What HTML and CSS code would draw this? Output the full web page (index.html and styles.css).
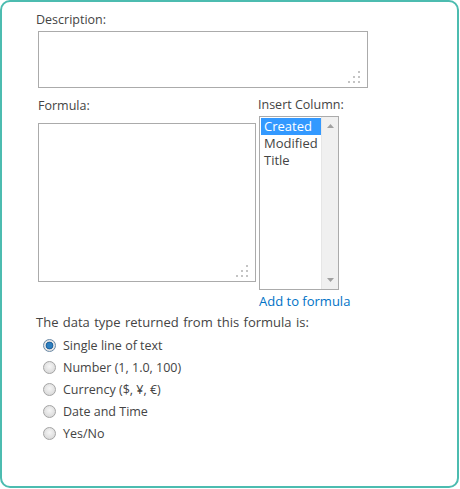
FILE: index.html
```html
<!DOCTYPE html>
<html>
<head>
<meta charset="utf-8">
<link rel="stylesheet" href="styles.css">
</head>
<body>
<div class="card">
  <div class="label">Description:</div>
  <div class="box desc">
    <svg class="grip" width="13" height="13" viewBox="0 0 13 13"><g fill="#c4c4c4"><rect x="10" y="0" width="2" height="2"/><rect x="5" y="5" width="2" height="2"/><rect x="10" y="5" width="2" height="2"/><rect x="0" y="10" width="2" height="2"/><rect x="5" y="10" width="2" height="2"/><rect x="10" y="10" width="2" height="2"/></g></svg>
  </div>
  <div class="row">
    <div class="col-formula">
      <div class="label">Formula:</div>
      <div class="box formula">
        <svg class="grip" width="13" height="13" viewBox="0 0 13 13"><g fill="#c4c4c4"><rect x="10" y="0" width="2" height="2"/><rect x="5" y="5" width="2" height="2"/><rect x="10" y="5" width="2" height="2"/><rect x="0" y="10" width="2" height="2"/><rect x="5" y="10" width="2" height="2"/><rect x="10" y="10" width="2" height="2"/></g></svg>
      </div>
    </div>
    <div class="col-insert">
      <div class="label">Insert Column:</div>
      <div class="listbox">
        <div class="items">
          <div class="item selected">Created</div>
          <div class="item">Modified</div>
          <div class="item">Title</div>
        </div>
        <div class="scrollbar">
          <svg width="7" height="4" viewBox="0 0 7 4"><path d="M0 4 L3.5 0 L7 4 Z" fill="#a0a0a0"/></svg>
          <svg width="7" height="4" viewBox="0 0 7 4"><path d="M0 0 L3.5 4 L7 0 Z" fill="#a0a0a0"/></svg>
        </div>
      </div>
      <a class="link" href="#">Add to formula</a>
    </div>
  </div>
  <div class="label type-label">The data type returned from this formula is:</div>
  <div class="radios">
    <div class="radio-row"><span class="radio checked"></span><span>Single line of text</span></div>
    <div class="radio-row"><span class="radio"></span><span>Number (1, 1.0, 100)</span></div>
    <div class="radio-row"><span class="radio"></span><span>Currency ($, ¥, €)</span></div>
    <div class="radio-row"><span class="radio"></span><span>Date and Time</span></div>
    <div class="radio-row"><span class="radio"></span><span>Yes/No</span></div>
  </div>
</div>
</body>
</html>
```
FILE: styles.css
```css
html, body {
  margin: 0;
  padding: 0;
  background: #fff;
}
body {
  font-family: "Open Sans", "Noto Sans", sans-serif;
  font-size: 12.5px;
  color: #444;
}
.card {
  box-sizing: border-box;
  width: 459px;
  height: 488px;
  border: 2px solid #4cbcb0;
  border-radius: 10px;
  padding: 9px 0 0 34px;
}
.label {
  line-height: 17px;
  height: 17px;
  white-space: nowrap;
}
.box {
  position: relative;
  box-sizing: border-box;
  border: 1px solid #ababab;
  background: #fff;
}
.desc {
  margin: 3px 0 0 2px;
  width: 330px;
  height: 57px;
}
.grip {
  position: absolute;
  right: 6px;
  bottom: 3px;
}
.row {
  display: flex;
  margin-top: 8px;
}
.col-formula {
  margin-left: 2px;
  width: 220px;
}
.col-formula .label {
  margin-top: 1px;
}
.formula {
  margin-top: 9px;
  width: 218px;
  height: 159px;
}
.col-insert {
  display: flex;
  flex-direction: column;
  align-items: flex-start;
}
.listbox {
  margin: 3px 0 0 1px;
  box-sizing: border-box;
  width: 80px;
  height: 174px;
  border: 1px solid #ababab;
  display: flex;
}
.items {
  flex: 1;
  padding: 1px 0 0 1px;
}
.item {
  height: 17px;
  line-height: 17px;
  padding-left: 3px;
  font-size: 13px;
}
.item.selected {
  background: #3399ff;
  color: #fff;
}
.scrollbar {
  width: 16px;
  background: #f0f0f0;
  border-left: 1px solid #e6e6e6;
  display: flex;
  flex-direction: column;
  justify-content: space-between;
  align-items: center;
  padding: 7px 0 7px;
}
.link {
  margin: 3px 0 0 1px;
  color: #0072c6;
  text-decoration: none;
  line-height: 17px;
  font-size: 13px;
}
.type-label {
  margin-top: 4px;
  font-size: 13px;
  word-spacing: 1px;
}
.radios {
  margin-top: 3px;
  padding-left: 7px;
}
.radio-row {
  display: flex;
  align-items: center;
  height: 22px;
  gap: 7px;
}
.radio {
  box-sizing: border-box;
  width: 13px;
  height: 13px;
  border-radius: 50%;
  border: 1px solid #a4a4a4;
  background: radial-gradient(circle at 50% 40%, #f6f6f6 0%, #e0e0e0 60%, #d2d2d2 100%);
  position: relative;
}
.radio.checked {
  background: radial-gradient(circle at 50% 50%, #2d7fc0 0 2.5px, #1a5a93 3.5px, #e8e8e8 4.2px, #d4d4d4 100%);
  border-color: #6b8aa6;
}
```
